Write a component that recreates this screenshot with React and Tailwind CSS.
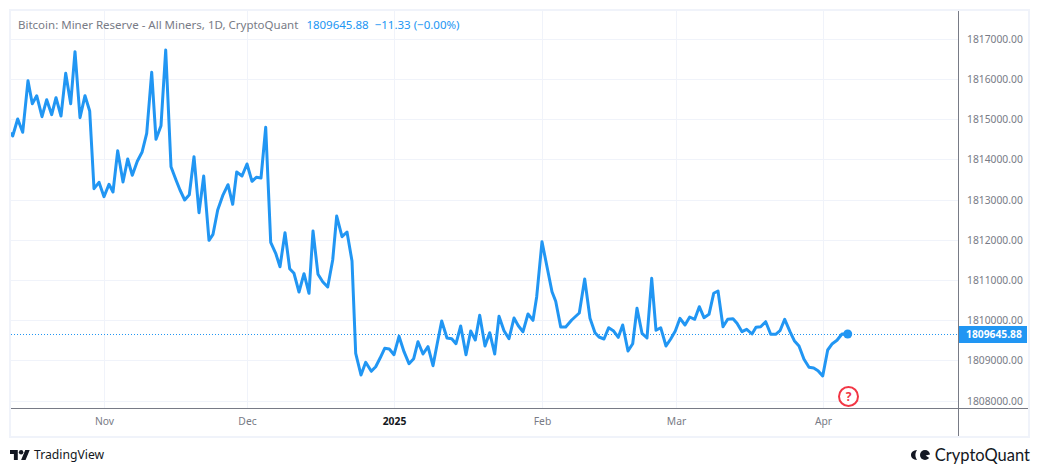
const pts = "10.7,132.7 12.7,136 17.7,119 22.7,132.3 28,80.7 32.3,103.7 36.7,95.7 42,116.7 46.7,99.7 51.7,114.7 56,97.7 61,116 65.7,73.3 70.7,103.7 75,51.7 80,117.7 85,95.7 89.7,111 94,188.7 99,182.3 104,196.7 109,184.3 113,192 117.7,150.7 123,182 127.7,159 132.3,175.3 137.3,161.3 142,152.3 146.7,133.3 151.7,72.3 156,139.3 161,125.7 165.7,50 171,166.7 176,180 180,190 184.7,200 189.3,194.7 194,156.7 199,212.7 203.7,176 209,240.3 213,234.3 217.7,210 222.7,195.7 228,184.7 232.7,204.3 236.7,172 242,176 247,164 252,181.3 256.3,177.3 261,178 265.7,127.3 270.7,242.3 275.7,253.3 280,266.7 285,232.7 289.7,268.7 294,273.3 299,292 304,273.7 309,293.3 313,231 318,274.3 322.7,281.7 327.7,287 332.7,260 336.7,216 342,236.7 347,232 352,261 355.7,353.3 361,375 365.7,362.3 371.3,371.3 375.7,366.7 380,358.3 384.7,348.3 389.3,349 394,354.7 399,336.3 404,351.7 409,363.7 413.7,358.7 418,341.7 423,354 428,346.7 433,365.7 437.3,343.3 441.7,321 447,338 451.7,338.7 456,343.7 460.7,326 466,354.7 470.7,331 475.3,340 479.7,315.3 485,346 489.7,332.7 494.7,354 499,316.3 504,330.7 509,338.7 514,318 518.3,325.7 523,331.7 528,314 533,320.3 536.7,296.7 542,241.7 547,266.7 552,291.7 555.7,301.3 560.7,327 565.7,327 571.7,320 579.3,313 584.7,279 590,318.3 595,332.7 599,337 604,339 608.7,327.7 613.3,330.7 618.3,337.3 622.7,325 628,351 632.7,343.7 637,308.3 642,333.3 647,338 651.7,278.3 656,330.3 660.7,327.7 666,346 670.7,339 675.3,331 680,318.3 685,325 689.7,317 694.7,319.3 699.3,306.7 704,317.7 709,314.3 713.7,293.3 718,291 723,326.7 727.7,319.3 733,318.7 737,323.3 742,331.7 746.7,329.3 752,334 756,327.3 760.7,326.7 765.7,321.7 770.7,334.3 775.7,334.3 780,330.7 784.7,319.3 790,331.7 794.3,340.7 799,346 804,359.3 809,367.3 813.7,368 818,370.7 822.7,376 827.7,350 832.3,343.7 837,340.3 842,334 847.7,334.3";

const gridY = [39.5, 79.5, 119.5, 159.5, 200.5, 240.5, 280.5, 320.5, 360.5, 401.5];
const gridX = [104.5, 247.5, 394.5, 542.5, 676.5, 823.5];
const prices = ["1817000.00", "1816000.00", "1815000.00", "1814000.00", "1813000.00", "1812000.00", "1811000.00", "1810000.00", "1809000.00", "1808000.00"];

function Chart() {
  return (
    <svg viewBox="11 11 947 397" className="block w-[947px] h-[397px]">
      {gridY.map((y) => (
        <line key={y} x1="11" x2="958" y1={y} y2={y} stroke="#f0f3fa" strokeWidth="1" />
      ))}
      {gridX.map((x) => (
        <line key={x} x1={x} x2={x} y1="11" y2="408" stroke="#f0f3fa" strokeWidth="1" />
      ))}
      <line x1="11" x2="958" y1="334.5" y2="334.5" stroke="#2196f3" strokeWidth="1" strokeDasharray="1 2" />
      <polyline points={pts} fill="none" stroke="#2196f3" strokeWidth="3" strokeLinejoin="round" strokeLinecap="butt" />
      <circle cx="847.7" cy="334" r="4.5" fill="#2196f3" />
    </svg>
  );
}

function TvLogo() {
  return (
    <svg width="20" height="10" viewBox="0 4 36 18" className="block">
      <path d="M14 22H7V11H0V4h14v18zM28 22h-8l7.5-18h8L28 22z" fill="#131722" />
      <circle cx="20" cy="8" r="4" fill="#131722" />
    </svg>
  );
}

function CqLogo() {
  return (
    <svg width="19" height="10" viewBox="0 0 19 10" className="block">
      <path d="M6 0C2.5 0.3 0 2.3 0 5s2.5 4.7 6 5C5 8.5 4.4 6.8 4.4 5S5 1.5 6 0z" fill="#131722" />
      <circle cx="14" cy="5" r="5" fill="#131722" />
      <path d="M14.6 5.4L19 4.6V8.6z" fill="#ffffff" />
    </svg>
  );
}

export default function App() {
  return (
    <div className="w-[1040px] h-[472px] bg-white pt-[9px] pl-[9px] font-['Noto_Sans',sans-serif] overflow-hidden">
      <div className="w-[1021px] h-[429px] border-2 border-[#f0f3fa] flex flex-col">
        <div className="flex h-[398px] border-b border-[#787b86]">
          <div className="relative w-[947px]">
            <Chart />
            <div className="absolute left-[7px] top-[5px] flex gap-[8px] text-[11.5px] leading-[18px] whitespace-nowrap">
              <span className="text-[#787b86]">Bitcoin: Miner Reserve - All Miners, 1D, CryptoQuant</span>
              <span className="flex gap-[6px] text-[#2196f3]">
                <span>1809645.88</span>
                <span>−11.33 (−0.00%)</span>
              </span>
            </div>
            <div className="absolute left-[827px] top-[375px] w-[21px] h-[21px] rounded-full border-2 border-[#f23645] bg-white flex items-center justify-center text-[12px] font-bold leading-none text-[#f23645]">
              ?
            </div>
          </div>
          <div className="relative flex-1 border-l border-[#787b86] pt-[8.5px] pl-[8px] text-[10.3px] text-[#787b86] overflow-hidden">
            {prices.map((p) => (
              <div key={p} className="h-[40.2px] flex items-center whitespace-nowrap">{p}</div>
            ))}
            <div className="absolute left-0 top-[315px] w-[68px] h-[17px] bg-[#2196f3] text-white font-bold text-[10.3px] leading-[17px] pl-[7px] whitespace-nowrap">
              1809645.88
            </div>
          </div>
        </div>
        <div className="flex flex-1">
          <div className="w-[947px] flex items-center pb-[1px] text-[10.3px] text-[#787b86]">
            <div className="w-[187px] text-center">Nov</div>
            <div className="w-[99px] text-center">Dec</div>
            <div className="w-[195px] text-center font-bold text-[#131722]">2025</div>
            <div className="w-[101px] text-center">Feb</div>
            <div className="w-[167px] text-center">Mar</div>
            <div className="w-[127px] text-center">Apr</div>
          </div>
          <div className="flex-1 border-l border-[#787b86]" />
        </div>
      </div>
      <div className="w-[1021px] flex items-center justify-between pl-[1px] pt-[7px]">
        <div className="flex items-center gap-[4px] text-[12.2px] leading-[20px] text-[#131722]">
          <TvLogo />
          <span>TradingView</span>
        </div>
        <div className="flex items-center gap-[5px] text-[16.5px] leading-[20px] text-[#131722] font-['Lato',sans-serif]">
          <CqLogo />
          <span>CryptoQuant</span>
        </div>
      </div>
    </div>
  );
}
